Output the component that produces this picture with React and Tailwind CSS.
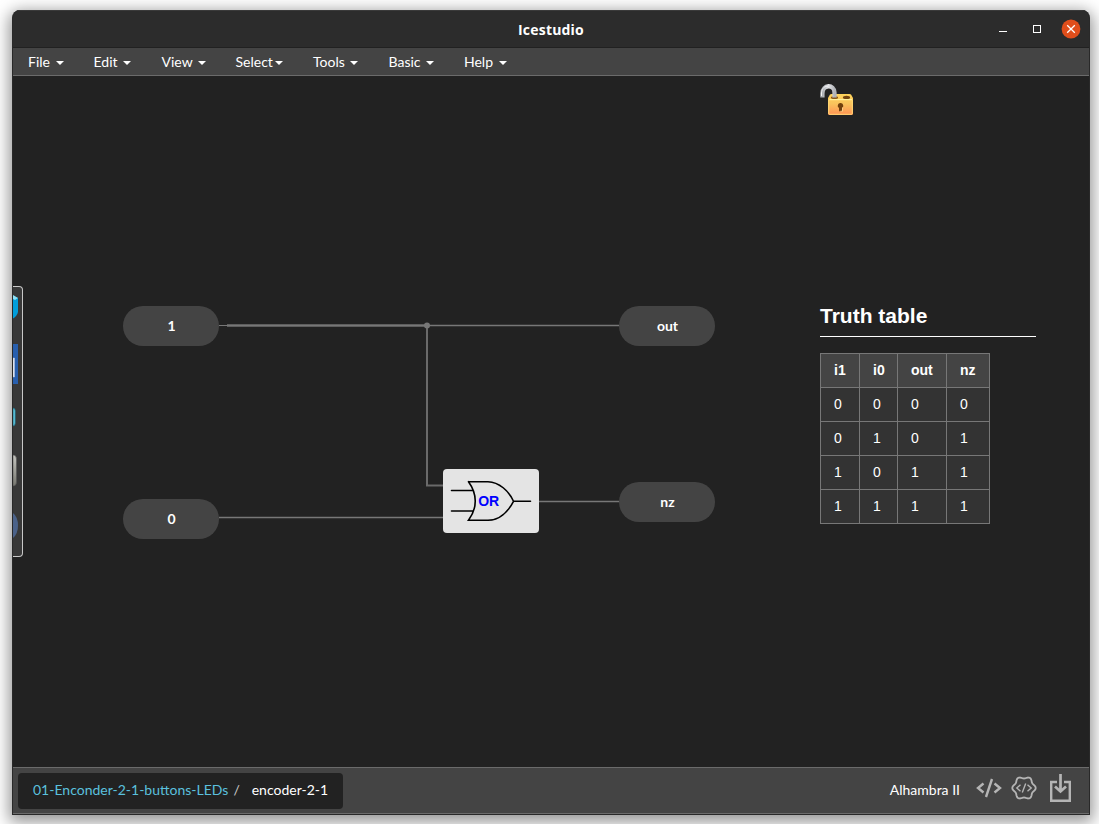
import React from "react";

const MENUS = [
  { label: "File", pos: "w-[65.5px]", gap: "ml-[6px]" },
  { label: "Edit", pos: "w-[68px]", gap: "ml-[5px]" },
  { label: "View", pos: "w-[74px]", gap: "ml-[5px]" },
  { label: "Select", pos: "w-[77.5px]", gap: "ml-[2px]" },
  { label: "Tools", pos: "w-[75.5px]", gap: "ml-[5px]" },
  { label: "Basic", pos: "w-[75.5px]", gap: "ml-[5px]" },
  { label: "Help", pos: "w-[60px]", gap: "ml-[6px]" },
];

const ROWS = [
  [0, 0, 0, 0],
  [0, 1, 0, 1],
  [1, 0, 1, 1],
  [1, 1, 1, 1],
];

// Six-lobed gear outline centred on (1024, 788)
const GEAR =
  "M" +
  Array.from({ length: 72 }, (_, i) => {
    const a = (i * Math.PI) / 36;
    const r = 10.6 + 1.1 * Math.cos(6 * a);
    return `${(1024 + r * Math.cos(a)).toFixed(2)} ${(788 + r * Math.sin(a)).toFixed(2)}`;
  }).join("L") +
  "Z";

function TitleBar() {
  return (
    <div className="relative flex h-[38px] shrink-0 items-center justify-end border-b border-t border-b-[#212121] border-t-[#3a3a3a] bg-[#2c2c2c] pr-[8px]">
      <div className="absolute inset-x-0 pt-[1px] text-center font-['Open_Sans',sans-serif] text-[14px] font-bold leading-[36px] tracking-[0.2px] text-white">
        Icestudio
      </div>
      <svg className="relative h-[20px] w-[84px]" viewBox="0 0 84 20">
        <path d="M2 12.5h8" stroke="#fff" strokeWidth="1" />
        <rect x="36.5" y="6.5" width="7" height="7" fill="none" stroke="#fff" />
        <circle cx="74" cy="10" r="9.4" fill="#e04e1b" />
        <path d="M70.200 6.200l7.600 7.600m0-7.600l-7.600 7.600" stroke="#fff" strokeWidth="1.3" />
      </svg>
    </div>
  );
}

function MenuBar() {
  return (
    <div className="flex h-[28px] shrink-0 items-center border-b border-[#6b6b6b] bg-[#444] pl-[15px] text-[14px] text-white">
      {MENUS.map((m) => (
        <div key={m.label} className={`flex shrink-0 items-center ${m.pos}`}>
          <span>{m.label}</span>
          <svg className={`mt-[2px] h-[4px] w-[8px] ${m.gap}`} viewBox="0 0 8 4">
            <path d="M0 0h8l-4 4z" fill="#fff" />
          </svg>
        </div>
      ))}
    </div>
  );
}

function Port({ className, children }) {
  return (
    <div className={`absolute flex h-[40px] w-[96px] items-center justify-center rounded-full bg-[#444] pb-[2px] pl-[1px] text-[14px] font-bold text-white ${className}`}>
      {children}
    </div>
  );
}

function Wires() {
  return (
    <svg className="absolute left-0 top-0 h-[691px] w-[1076px]" viewBox="13 76 1076 691" fill="none">
      <path d="M219 325.5H619" stroke="#777" />
      <path d="M227 325.5H427" stroke="#777" strokeOpacity=".7" strokeWidth="3" />
      <path d="M427 325.5H619" stroke="#777" strokeOpacity=".5" strokeWidth="2" />
      <path d="M427 325V485.5H443" stroke="#777" strokeOpacity=".85" strokeWidth="2" />
      <path d="M219 517.5H443M539 501.5H619" stroke="#777" strokeWidth="1.3" />
      <circle cx="427" cy="325.5" r="3" fill="#777" />
    </svg>
  );
}

function OrGate() {
  return (
    <div className="absolute left-[430px] top-[393px] h-[64px] w-[96px] rounded-[4px] bg-[#e4e4e4]">
      <svg className="h-full w-full" viewBox="443 469 96 64">
        <path
          d="M469 481.700H488C499 482 509 491 513.500 501.300C508 512 499 520.300 488 520.300H468.500C477.500 508 477.500 494 468.500 481.700M451.500 490.500H473M451.500 511H473M513.500 501.300H530.500"
          fill="none"
          stroke="#000"
          strokeWidth="1.6"
          strokeLinecap="round"
        />
        <text x="488.700" y="506.200" textAnchor="middle" fill="#00f" fontFamily="Liberation Sans, sans-serif" fontSize="14" fontWeight="700">
          OR
        </text>
      </svg>
    </div>
  );
}

function Padlock() {
  return (
    <svg className="absolute left-[806px] top-[7px] h-[34px] w-[36px]" viewBox="819 83 36 34">
      <defs>
        <linearGradient id="lock-body" x1="0" y1="0" x2="0" y2="1">
          <stop offset="0" stopColor="#ffd45b" />
          <stop offset=".45" stopColor="#f9c45c" />
          <stop offset="1" stopColor="#ff9154" />
        </linearGradient>
        <linearGradient id="lock-metal" x1="0" y1="0" x2="1" y2="0">
          <stop offset="0" stopColor="#a9acb0" />
          <stop offset=".5" stopColor="#e2e3e6" />
          <stop offset="1" stopColor="#b2b4b9" />
        </linearGradient>
      </defs>
      <path d="M828 98l2-3.500q.5-.5 1.500-.5h18q1 0 1.500.5l2 3.500v15.500q0 1.500-1.500 1.500h-22q-1.500 0-1.500-1.500z" fill="url(#lock-body)" />
      <path d="M828.700 100V113.300q0 1 1 1H851.300q1 0 1-1V100z" fill="none" stroke="#ffd875" />
      <path d="M829.500 99.500H852" stroke="#fff09b" />
      <ellipse cx="834.500" cy="97.500" rx="3.600" ry="1.600" fill="#8a5919" />
      <ellipse cx="846.500" cy="97.400" rx="3.600" ry="1.600" fill="#74450f" />
      <path d="M822.400 97.500V93.500C822.400 84 834.500 84 834.500 92.500V97.500" fill="none" stroke="url(#lock-metal)" strokeWidth="4.300" />
      <path d="M821.500 96V93C822 87.500 825 86 828 86.300" fill="none" stroke="#f0f0f2" strokeWidth="1" />
      <path d="M840.500 103a2.700 2.700 0 0 1 1.500 5v3.200h-3V108a2.700 2.700 0 0 1 1.500-5z" fill="#70400d" />
      <path d="M842.500 107.500v3.700h-2" fill="none" stroke="#ffd690" strokeWidth=".8" />
    </svg>
  );
}

function TruthTable() {
  return (
    <div className="absolute left-[807px] top-[226px] w-[216px] font-['Liberation_Sans',sans-serif] text-white">
      <h2 className="h-[35px] border-b border-white text-[21px] font-bold leading-[28px]">Truth table</h2>
      <table className="mt-[16px] w-[170px] table-fixed border-collapse text-[14px] leading-[20px]">
        <colgroup>
          <col className="w-[39px]" />
          <col className="w-[38px]" />
          <col className="w-[49px]" />
          <col className="w-[43px]" />
        </colgroup>
        <thead>
          <tr className="h-[34px] bg-[#444]">
            {["i1", "i0", "out", "nz"].map((h) => (
              <th key={h} className="border border-[#777] p-0 pb-[2px] pl-[13px] text-left font-bold">{h}</th>
            ))}
          </tr>
        </thead>
        <tbody>
          {ROWS.map((row, i) => (
            <tr key={i} className="h-[34px] bg-[#333]">
              {row.map((v, j) => (
                <td key={j} className="border border-[#777] p-0 pb-[2px] pl-[13px]">{v}</td>
              ))}
            </tr>
          ))}
        </tbody>
      </table>
    </div>
  );
}

function Dock() {
  return (
    <div className="absolute left-0 top-[210px] h-[271px] w-[10px] rounded-r-[4px] border border-l-0 border-[#c8c8c8] bg-[#383838]">
      <svg className="h-[269px] w-[9px]" viewBox="13 287 9 269">
        <defs>
          <linearGradient id="dock-metal" x1="0" y1="0" x2="0" y2="1">
            <stop offset="0" stopColor="#c5c5c0" />
            <stop offset="1" stopColor="#77776f" />
          </linearGradient>
        </defs>
        <path d="M13 296l5 2v14q-1 4-5 6.500z" fill="#009edb" />
        <path d="M13 295l5 3-3 2-2-1z" fill="#8de0f5" />
        <path d="M13 344h5v40h-5z" fill="#285fae" />
        <path d="M13 358h1.500v19h-1.500z" fill="#e7eaf0" stroke="#b8c8e2" strokeWidth=".5" />
        <path d="M13 408q2.300 0 2.300 3v12q0 3-2.300 3z" fill="#62c8df" stroke="#1b6072" strokeWidth=".7" />
        <path d="M13 455q3.500 0 3.500 4v23q0 4-3.500 4z" fill="url(#dock-metal)" stroke="#555" strokeWidth=".6" />
        <path d="M13 513q5 4 5 12.500t-5 12.500z" fill="#4b6289" />
      </svg>
    </div>
  );
}

function StatusBar() {
  return (
    <div className="flex h-[47px] shrink-0 items-center justify-between border-b border-t border-[#6b6b6b] bg-[#444] pl-[5px] pr-[17px] text-[14px]">
      <div className="flex h-[36px] w-[325px] items-center rounded-[4px] bg-[#222] pb-[2px] pl-[15px]">
        <span className="text-[#5bc0de]">01-Enconder-2-1-buttons-LEDs</span>
        <span className="ml-[5px] text-[#ccc]">/</span>
        <span className="ml-[12px] text-white">encoder-2-1</span>
      </div>
      <div className="flex items-center">
        <span className="mb-[2px] mr-[16px] text-white">Alhambra II</span>
        <svg className="-mt-[3px] h-[32px] w-[96px]" viewBox="976 773 96 32" fill="none" stroke="#b5b5b5">
          <path d="M983.500 783.500l-5.500 4.500 5.500 4.500M994.500 783.500l5.500 4.500-5.500 4.500M992 779l-6 18" strokeWidth="2.400" />
          <path d={GEAR} strokeWidth="1.800" strokeLinejoin="round" />
          <path d="M1020.500 784.800l-3.700 3.200 3.700 3.200M1027.500 784.800l3.700 3.200-3.700 3.200M1025.700 783.500l-3.400 9" strokeWidth="1.400" />
          <path d="M1057 782H1051.200V800.800H1069.800V782H1064" strokeWidth="2.400" />
          <path d="M1060.500 774V791M1055 786.500l5.500 5 5.500-5" strokeWidth="2.700" />
        </svg>
      </div>
    </div>
  );
}

export default function App() {
  return (
    <div className="h-[824px] w-[1099px] overflow-hidden bg-white pl-[12px] pt-[10px] font-[Lato,sans-serif]">
      <div className="flex h-[805px] w-[1078px] flex-col overflow-hidden rounded-t-[8px] border border-t-0 border-[#292929] bg-[#222] shadow-[0_4px_16px_3px_rgba(0,0,0,0.42)]">
        <TitleBar />
        <MenuBar />
        <main className="relative min-h-0 flex-1 bg-[#222]">
          <Wires />
          <Port className="left-[110px] top-[230px]">1</Port>
          <Port className="left-[110px] top-[423px]">0</Port>
          <Port className="left-[606px] top-[230px]">out</Port>
          <Port className="left-[606px] top-[406px]">nz</Port>
          <OrGate />
          <Padlock />
          <TruthTable />
          <Dock />
        </main>
        <StatusBar />
      </div>
    </div>
  );
}
